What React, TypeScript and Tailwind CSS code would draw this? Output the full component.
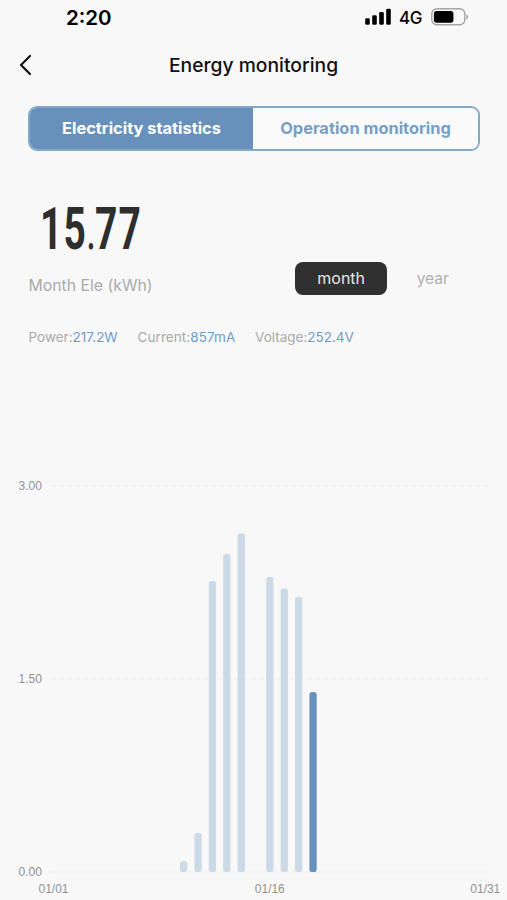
import React from "react";

const bars = [
  { x: 180, top: 861 },
  { x: 194.4, top: 833 },
  { x: 208.8, top: 581 },
  { x: 223.2, top: 554 },
  { x: 237.6, top: 533.5 },
  { x: 266.2, top: 577 },
  { x: 280.6, top: 588.5 },
  { x: 295, top: 597 },
  { x: 309.4, top: 692, active: true },
];

const gridLines = [
  { y: 486, label: "3.00" },
  { y: 679, label: "1.50" },
  { y: 872, label: "0.00" },
];

function StatusBar() {
  return (
    <div className="flex h-[34px] items-center justify-between pl-[66px] pr-[38px]">
      <span className="pt-px text-[20.5px] font-semibold leading-[34px] text-black">2:20</span>
      <div className="flex items-center">
        <svg width="27" height="18" viewBox="0 0 27 18" className="fill-black">
          <rect x="0.2" y="10.3" width="4.6" height="6.5" rx="1.3" />
          <rect x="7.2" y="7.3" width="4.6" height="9.5" rx="1.3" />
          <rect x="14.2" y="4" width="4.6" height="12.8" rx="1.3" />
          <rect x="21.2" y="0.8" width="4.6" height="16" rx="1.3" />
        </svg>
        <span className="ml-[7px] w-[24px] pt-px text-[17px] leading-[34px] font-medium tracking-[-0.3px] text-black">4G</span>
        <svg width="38" height="18" viewBox="0 0 38 18" className="ml-[8px]">
          <rect x="0.8" y="0.8" width="33" height="16" rx="5" fill="none" stroke="#a5a5a5" strokeWidth="1.4" />
          <rect x="2.9" y="2.9" width="19.5" height="11.8" rx="2.6" fill="#000" />
          <path d="M35.3 6.2c2.3.7 2.3 4.7 0 5.4z" fill="#a5a5a5" />
        </svg>
      </div>
    </div>
  );
}

function Reading({ label, value, className }: { label: string; value: string; className: string }) {
  return (
    <span className={className}>
      <span className="text-[#a9aaac]">{label}:</span>
      <span className="text-[#6f9dc8]">{value}</span>
    </span>
  );
}

function Chart() {
  return (
    <svg width="507" height="440" viewBox="0 460 507 440" className="block">
      {gridLines.map((g) => (
        <g key={g.label}>
          <line x1="50" x2="488" y1={g.y} y2={g.y} stroke="#eeeeee" strokeWidth="1" strokeDasharray={g.y === 872 ? undefined : "6 2"} />
          <text x="18.5" y={g.y + 4} fontSize="12" fill="#929292" textLength="23.5" fontFamily="'Liberation Sans', Arial, sans-serif">
            {g.label}
          </text>
        </g>
      ))}
      {bars.map((b) => (
        <rect key={b.x} x={b.x} y={b.top} width="7.3" height={872 - b.top} rx="2.8" fill={b.active ? "#6692bb" : "#ccd9e6"} />
      ))}
      {[
        { x: 38.5, t: "01/01" },
        { x: 254.8, t: "01/16" },
        { x: 470.3, t: "01/31" },
      ].map((d) => (
        <text key={d.t} x={d.x} y="892.5" fontSize="12" fill="#929292" textLength="30" fontFamily="'Liberation Sans', Arial, sans-serif">
          {d.t}
        </text>
      ))}
    </svg>
  );
}

export default function App() {
  return (
    <div className="h-[900px] w-[507px] overflow-hidden bg-[#f8f8f8] font-['Inter','Liberation_Sans',sans-serif]">
      <StatusBar />
      <header className="grid h-[62px] grid-cols-[60px_1fr_60px] items-center">
        <svg width="14" height="22" viewBox="0 0 14 22" className="ml-[19px]" fill="none" stroke="#111" strokeWidth="2.2" strokeLinecap="round" strokeLinejoin="round">
          <path d="M11 2 2 11l9 9" />
        </svg>
        <h1 className="text-center text-[19.3px] font-medium whitespace-nowrap text-[#111]">Energy monitoring</h1>
      </header>
      <div className="mt-[10px] ml-[28px] flex h-[45px] w-[452px] overflow-hidden rounded-[9px] border-2 border-[#85a9cb] text-[16.4px] font-bold">
        <div className="flex w-[223px] items-center justify-center bg-[#6791ba] text-white">Electricity statistics</div>
        <div className="flex flex-1 items-center justify-center bg-[#fafafa] text-[#759fc8]">Operation monitoring</div>
      </div>
      <section className="flex h-[153px] justify-between pt-[45px]">
        <div className="w-[200px]">
          <div className="ml-[39.5px] flex h-[66px] origin-left scale-x-[0.66] font-['Roboto',sans-serif] text-[59px] leading-[66px] font-bold tracking-[1.8px] text-[#2e2e2e]">
            <span>15</span>
            <span className="flex w-[12px] justify-center font-normal tracking-normal">.</span>
            <span>77</span>
          </div>
          <div className="ml-[28.5px] mt-[12px] text-[15.8px] leading-[24px] whitespace-nowrap text-[#a9aaac]">Month Ele (kWh)</div>
        </div>
        <div className="mt-[65px] flex h-[34px] items-center pr-[58px] text-[16px]">
          <div className="flex h-[33px] w-[92px] items-center justify-center rounded-[8px] bg-[#303030] text-[#e6e6e6]">month</div>
          <div className="ml-[29.5px] pt-[2px] text-[15.6px] text-[#b0b0b0]">year</div>
        </div>
      </section>
      <div className="flex h-[156px] pt-[23px] pl-[28.5px] text-[13.5px] leading-[20px]">
        <Reading label="Power" value="217.2W" className="w-[109px] whitespace-nowrap" />
        <Reading label="Current" value="857mA" className="w-[117.5px] whitespace-nowrap tracking-[0.08px]" />
        <Reading label="Voltage" value="252.4V" className="whitespace-nowrap" />
      </div>
      <Chart />
    </div>
  );
}
